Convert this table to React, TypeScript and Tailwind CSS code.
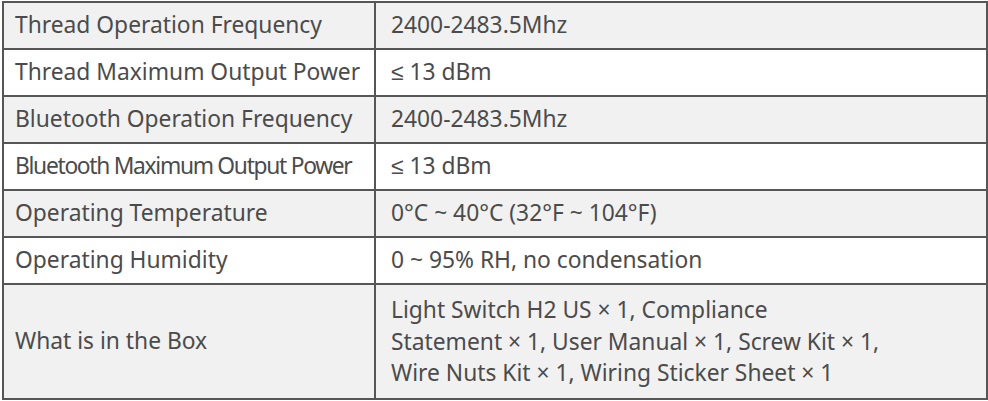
import React from 'react';

type Row = { label: string; value: React.ReactNode; tight?: boolean; tall?: boolean };

const rows: Row[] = [
  { label: 'Thread Operation Frequency', value: '2400-2483.5Mhz' },
  { label: 'Thread Maximum Output Power', value: '≤ 13 dBm' },
  { label: 'Bluetooth Operation Frequency', value: '2400-2483.5Mhz' },
  { label: 'Bluetooth Maximum Output Power', value: '≤ 13 dBm', tight: true },
  { label: 'Operating Temperature', value: '0°C ~ 40°C (32°F ~ 104°F)' },
  { label: 'Operating Humidity', value: '0 ~ 95% RH, no condensation' },
  {
    label: 'What is in the Box',
    value: (
      <>
        Light Switch H2 US × 1, Compliance
        <br />
        Statement × 1, User Manual × 1, Screw Kit × 1,
        <br />
        Wire Nuts Kit × 1, Wiring Sticker Sheet × 1
      </>
    ),
    tall: true,
  },
];

const App: React.FC = () => {
  return (
    <div className="h-[401px] w-[988px] bg-white pl-[2px] pt-px">
      <table
        className="w-[986px] border-collapse text-[22.8px] text-[#4b4b4b]"
        style={{ fontFamily: '"Noto Sans", "Liberation Sans", sans-serif' }}
      >
        <tbody>
          {rows.map((row, i) => (
            <tr key={row.label} className={i % 2 === 0 ? 'bg-[#f1f1f1]' : 'bg-white'}>
              <td
                className={`w-[372px] border-2 border-[#565656] pl-[11px] align-middle ${
                  row.tall ? 'h-[115px]' : 'h-[47px]'
                } ${row.tight ? 'tracking-[-1.3px]' : ''}`}
              >
                {row.label}
              </td>
              <td
                className={`border-2 border-[#565656] pl-[15px] align-middle ${
                  row.tall ? 'leading-[31.5px]' : ''
                }`}
              >
                {row.value}
              </td>
            </tr>
          ))}
        </tbody>
      </table>
    </div>
  );
};

export default App;
